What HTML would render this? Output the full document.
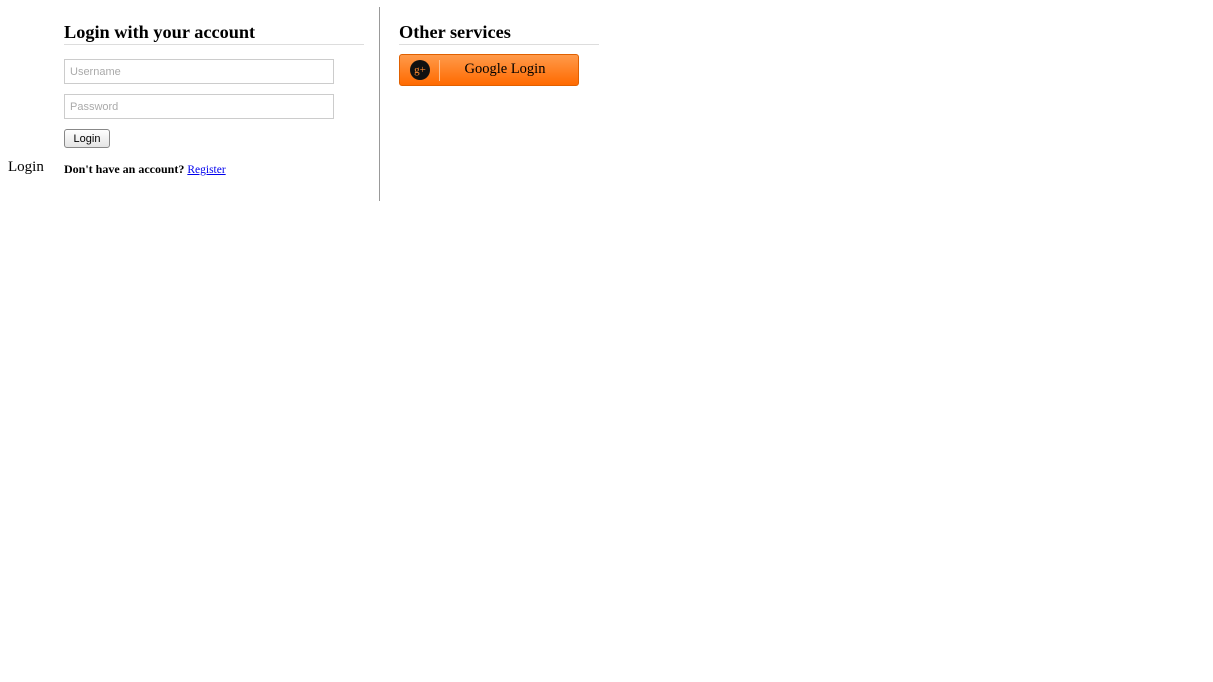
<!DOCTYPE html>
<html><head><style>
body{margin:0;background:#fff;font-family:"Liberation Serif",serif;}
.abs{position:absolute;}
h2{position:absolute;margin:0;font-size:18.3px;font-weight:bold;line-height:22px;}
.rule{position:absolute;height:1px;background:#ddd;}
.inp{position:absolute;height:23px;border:1px solid #ccc;font-family:"Liberation Sans",sans-serif;font-size:11px;color:#aaa;line-height:25px;padding-left:5px;width:263px;}
</style></head><body>
<div class="abs" style="left:8px;top:159px;font-size:15px;">Login</div>
<h2 style="left:64px;top:21px;">Login with your account</h2>
<div class="rule" style="left:64px;top:44px;width:300px;"></div>
<div class="inp" style="left:64px;top:59px;">Username</div>
<div class="inp" style="left:64px;top:94px;">Password</div>
<div class="abs" style="left:64px;top:129px;width:44px;height:17px;border:1px solid #888;border-radius:3px;background:linear-gradient(#fff,#e4e4e4);font-family:'Liberation Sans',sans-serif;font-size:11px;text-align:center;line-height:18px;">Login</div>
<div class="abs" style="left:64px;top:162px;font-size:12px;font-weight:bold;">Don't have an account? <span style="font-weight:normal;color:#00e;text-decoration:underline;font-size:11.5px;">Register</span></div>
<div class="abs" style="left:379px;top:7px;width:1px;height:194px;background:#999;"></div>
<h2 style="left:399px;top:21px;">Other services</h2>
<div class="rule" style="left:399px;top:44px;width:200px;"></div>
<div class="abs" style="left:399px;top:54px;width:178px;height:30px;border:1px solid #e06000;border-radius:3px;background:linear-gradient(#ff9a4a,#ff6a00);">
<div class="abs" style="left:10px;top:5px;width:20px;height:20px;border-radius:50%;background:#111;color:#ff8a30;font-size:11px;text-align:center;line-height:20px;">g+</div>
<div class="abs" style="left:39px;top:5px;width:1px;height:21px;background:#ffc090;"></div>
<div class="abs" style="left:40px;top:0px;width:130px;text-align:center;line-height:29px;font-size:14.5px;">Google Login</div>
</div>
</body></html>
